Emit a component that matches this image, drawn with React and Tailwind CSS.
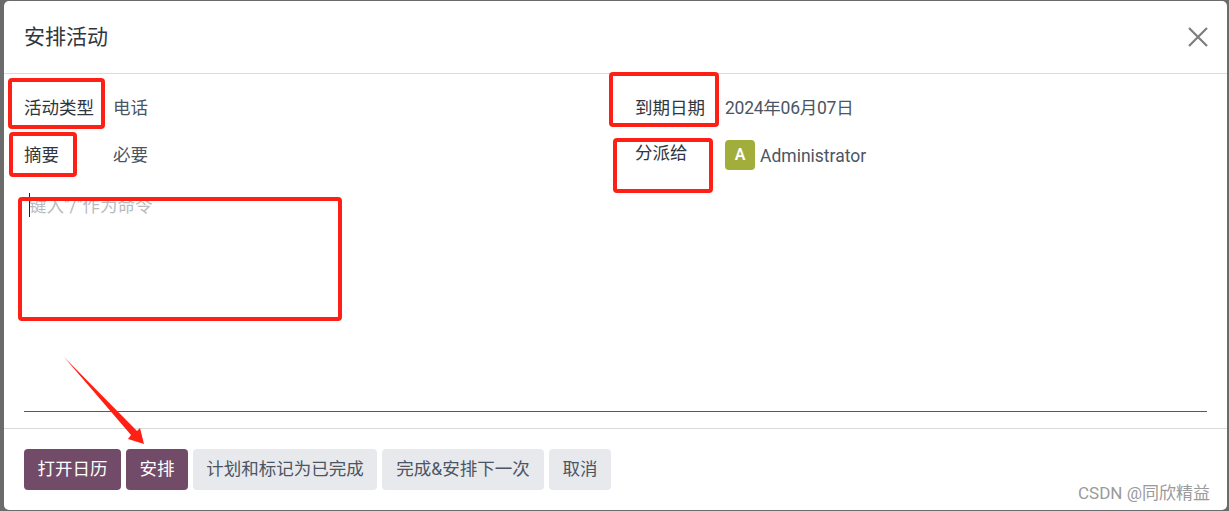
import React from 'react'

const font = { fontFamily: 'Roboto, "Noto Sans CJK SC", sans-serif' }

function RedBox({ className }) {
  return <div className={`absolute border-[4px] border-[#ff2015] rounded-[4px] ${className}`} />
}

export default function App() {
  return (
    <div className="relative w-[1229px] h-[511px] overflow-hidden bg-[#6b6b6b] pl-[4px] pr-[2px] pt-[1px] pb-[1px]" style={font}>
      {/* Modal */}
      <div className="relative flex flex-col h-full bg-white rounded-[5px] text-[17.5px] text-[#4b5563]">
        <header className="flex items-center justify-between h-[73px] pl-[20px] pr-[19px] border-b border-[#d8dadd]">
          <h1 className="text-[21px] font-normal text-[#2f3640] leading-none">安排活动</h1>
          <svg width="20" height="20" viewBox="0 0 20 20" fill="none" stroke="#7d7d7d" strokeWidth="2.2">
            <path d="M1 1 L19 19 M19 1 L1 19" />
          </svg>
        </header>

        <div className="flex-1 flex flex-col px-[20px]">
          <div className="grid grid-cols-[611px_1fr] mt-[21px]">
            <div className="flex h-[27px] items-center">
              <span className="w-[89px] text-[#2f3640]">活动类型</span>
              <span>电话</span>
            </div>
            <div className="flex h-[27px] items-center">
              <span className="w-[90px] text-[#2f3640]">到期日期</span>
              <span className="tracking-[-0.25px]">2024年06月07日</span>
            </div>
            <div className="flex h-[30px] items-center mt-[18px]">
              <span className="w-[89px] text-[#2f3640]">摘要</span>
              <span>必要</span>
            </div>
            <div className="flex h-[30px] items-center mt-[18px]">
              <span className="w-[90px] text-[#2f3640] -mt-[4px]">分派给</span>
              <span className="flex items-center gap-[5px]">
                <span className="flex items-center justify-center w-[30px] h-[30px] rounded-[4px] bg-[#a2ae3c] text-white text-[16px] font-semibold">A</span>
                <span className="pt-[2px]">Administrator</span>
              </span>
            </div>
          </div>

          {/* Editor */}
          <div className="relative flex-1 mt-[15px] border-b border-[#017e84]">
            <div className="absolute left-[5px] top-[8px] w-px h-[24px] bg-[#222]" />
            <p className="pl-[5px] pt-[8px] text-[#b8bbc0] leading-[26px]">键入"/"作为命令</p>
          </div>
        </div>

        <footer className="flex gap-[5px] h-[82px] px-[20px] pt-[20px] mt-[16px] border-t border-[#d8dadd]">
          <button className="w-[97px] h-[41px] rounded-[4px] bg-[#714b67] text-white">打开日历</button>
          <button className="w-[62px] h-[41px] rounded-[4px] bg-[#714b67] text-white">安排</button>
          <button className="w-[184px] h-[41px] rounded-[4px] bg-[#e7e9ed]">计划和标记为已完成</button>
          <button className="w-[162px] h-[41px] rounded-[4px] bg-[#e7e9ed]">完成&amp;安排下一次</button>
          <button className="w-[62px] h-[41px] rounded-[4px] bg-[#e7e9ed]">取消</button>
        </footer>
      </div>

      {/* Annotations */}
      <RedBox className="left-[8px] top-[78px] w-[97px] h-[51px]" />
      <RedBox className="left-[9px] top-[132px] w-[68px] h-[45px]" />
      <RedBox className="left-[18px] top-[197px] w-[324px] h-[124px]" />
      <RedBox className="left-[609px] top-[72px] w-[110px] h-[55px]" />
      <RedBox className="left-[613px] top-[138px] w-[100px] h-[55px]" />
      <svg className="absolute left-0 top-0" width="1229" height="511" fill="#ff2015">
        <path d="M64 357 L137 431 L140 428 L144 444 L128 439 L131 435 Z" />
      </svg>
      <span className="absolute left-[1078px] top-[483px] text-[17px] leading-[20px] text-[#9a9a9a] whitespace-nowrap">CSDN @同欣精益</span>
    </div>
  )
}
